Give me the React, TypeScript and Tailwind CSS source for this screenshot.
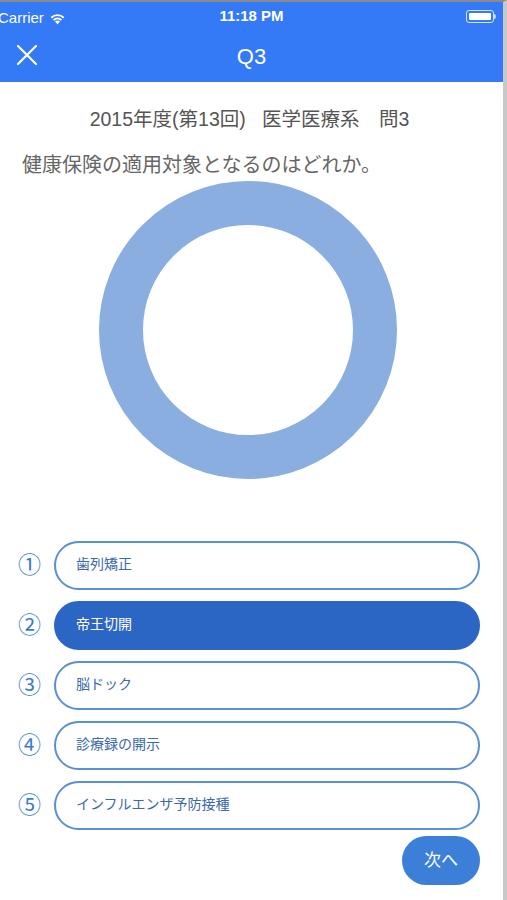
import React from 'react';

const options = ['歯列矯正', '帝王切開', '脳ドック', '診療録の開示', 'インフルエンザ予防接種'];
const marks = ['①', '②', '③', '④', '⑤'];

const StatusBar: React.FC = () => (
  <div className="relative h-[28px] flex items-center text-white">
    <div className="absolute left-[-2px] top-[5px] flex items-center gap-[5px]">
      <span className="text-[15px]">Carrier</span>
      <svg width="17" height="13" viewBox="0 0 17 13" fill="white">
        <path d="M8.5 12.5 L6 9.6 A3.6 3.6 0 0 1 11 9.6 Z" />
        <path d="M3.9 7.4 A6.6 6.6 0 0 1 13.1 7.4 L11.8 8.8 A4.8 4.8 0 0 0 5.2 8.8 Z" />
        <path d="M1.6 5 A9.8 9.8 0 0 1 15.4 5 L14.1 6.4 A8 8 0 0 0 2.9 6.4 Z" />
      </svg>
    </div>
    <span className="mx-auto text-[15px] font-semibold pt-[1px]">11:18 PM</span>
    <div className="absolute right-[7px] top-[8px] flex items-center">
      <div className="w-[28px] h-[13px] rounded-[3px] border border-white/80 p-[2px]">
        <div className="w-full h-full bg-white rounded-[1px]" />
      </div>
      <div className="w-[2px] h-[5px] bg-white/70 rounded-r-sm" />
    </div>
  </div>
);

export default function App() {
  return (
    <div
      className="w-[507px] h-[900px] bg-white border-t-2 border-t-[#8a8a8a] border-r-4 border-r-[#c8c8c8] overflow-hidden"
      style={{ fontFamily: '"Liberation Sans", "Noto Sans CJK JP", sans-serif' }}
    >
      <div className="bg-[#3479f6]">
        <StatusBar />
        <div className="relative h-[52px] flex items-center justify-center text-white">
          <svg className="absolute left-[16px] top-[14px]" width="22" height="22" viewBox="0 0 22 22" stroke="white" strokeWidth="2.2" strokeLinecap="round">
            <path d="M2 2 L20 20 M20 2 L2 20" />
          </svg>
          <span className="text-[22px]">Q3</span>
        </div>
      </div>

      <div className="pt-[23px] text-center text-[19.5px] text-[#555] pr-[4px]">
        2015年度(第13回)&nbsp;&nbsp;&nbsp;医学医療系　問3
      </div>
      <div className="pl-[22px] pt-[16px] text-[20px] text-[#666]">健康保険の適用対象となるのはどれか。</div>

      <div className="flex justify-center pt-[1px] pr-[7px]">
        <div className="w-[298px] h-[298px] rounded-full border-[44px] border-[#8aaedf]" />
      </div>

      <div className="mt-[62px] flex flex-col gap-[11px] pl-[18px] pr-[23px]">
        {options.map((o, i) => (
          <div key={o} className="flex items-center">
            <span className="w-[36px] text-[23px] text-[#3a7bd5] leading-none">{marks[i]}</span>
            <div
              className={
                i === 1
                  ? 'flex-1 h-[49px] rounded-full bg-[#2c66c5] border-2 border-[#2c66c5] flex items-center pl-[20px] pb-[3px] text-[14px] text-white'
                  : 'flex-1 h-[49px] rounded-full bg-white border-2 border-[#5b8fd6] flex items-center pl-[20px] pb-[3px] text-[14px] text-[#3b69ad]'
              }
            >
              {o}
            </div>
          </div>
        ))}
      </div>

      <div className="flex justify-end pr-[23px] pt-[6px]">
        <button className="w-[78px] h-[49px] rounded-full bg-[#3b7fd8] text-white text-[17px]">次へ</button>
      </div>
    </div>
  );
}
